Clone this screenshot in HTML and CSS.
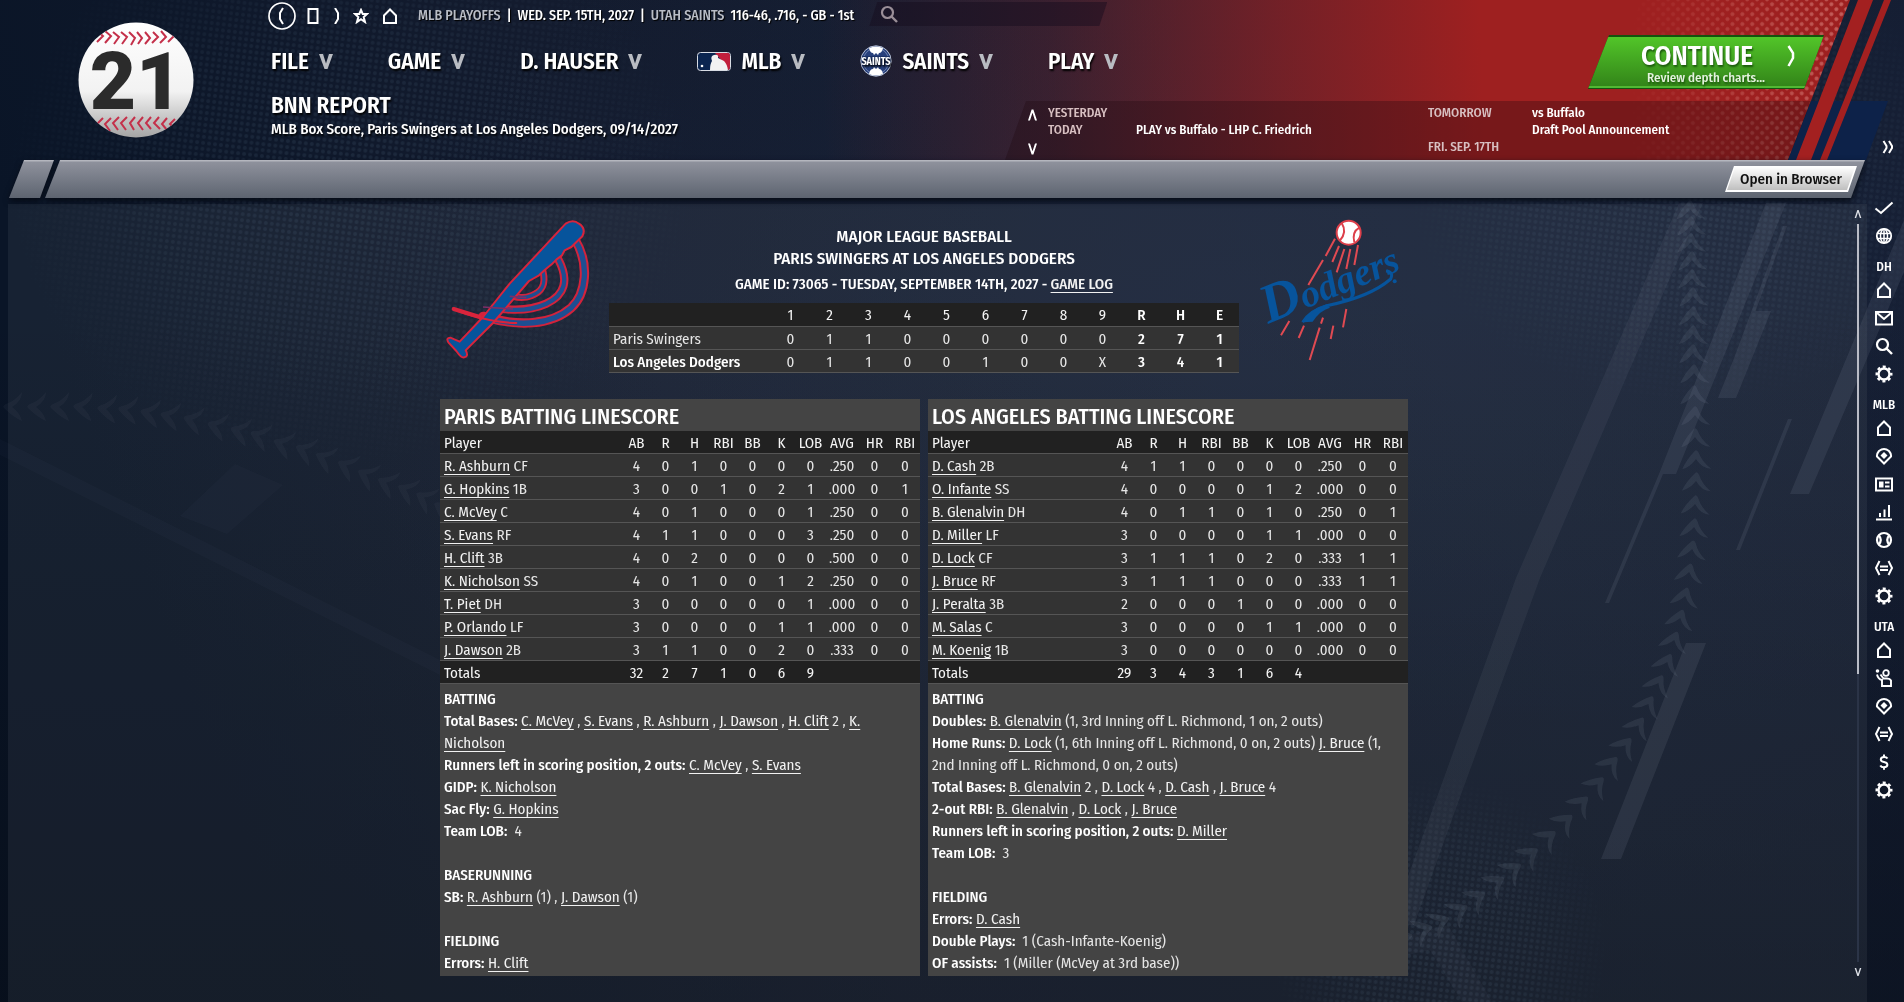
FILE: index.html
```html
<!DOCTYPE html>
<html lang="en">
<head>
<meta charset="utf-8">
<title>BNN Report - MLB Box Score</title>
<link rel="stylesheet" href="styles.css">
</head>
<body>
<svg class="backdrop" viewBox="0 0 1904 1002" preserveAspectRatio="xMaxYMin slice" aria-hidden="true">
  <defs>
    <linearGradient id="base" x1="0" y1="0.2" x2="1" y2="0"><stop offset="0" stop-color="#0a1527"/><stop offset=".3" stop-color="#131b2e"/><stop offset=".7" stop-color="#151f34"/><stop offset="1" stop-color="#151e33"/></linearGradient>
    <linearGradient id="fall" x1="0" y1="0" x2="0" y2="1"><stop offset=".3" stop-color="#050a12" stop-opacity="0"/><stop offset="1" stop-color="#050a12" stop-opacity=".5"/></linearGradient>
    <linearGradient id="red" gradientUnits="userSpaceOnUse" x1="820" y1="20" x2="1480" y2="0"><stop offset="0" stop-color="#9e2020" stop-opacity="0"/><stop offset=".35" stop-color="#9e2020" stop-opacity=".26"/><stop offset=".7" stop-color="#9e2020" stop-opacity=".68"/><stop offset="1" stop-color="#9e2020"/></linearGradient>
    <radialGradient id="spot"><stop offset="0" stop-color="#fff"/><stop offset=".55" stop-color="#fff" stop-opacity=".7"/><stop offset="1" stop-color="#fff" stop-opacity="0"/></radialGradient>
    <linearGradient id="edge"><stop offset="0" stop-color="#fff" stop-opacity="0"/><stop offset="1" stop-color="#fff"/></linearGradient>
    <pattern id="dots" width="6" height="6" patternUnits="userSpaceOnUse" patternTransform="rotate(7)"><circle cx="3" cy="3" r="2" fill="#5f7c93"/></pattern>
    <pattern id="pink" width="7" height="7" patternUnits="userSpaceOnUse" patternTransform="rotate(45)"><circle cx="3" cy="3" r="2" fill="#f3b0a8"/></pattern>
    <mask id="m1"><ellipse cx="350" cy="180" rx="350" ry="290" fill="url(#spot)"/><ellipse cx="1690" cy="180" rx="290" ry="230" fill="url(#spot)"/><ellipse cx="1440" cy="950" rx="170" ry="180" fill="url(#spot)"/></mask>
    <mask id="m2"><rect x="1630" width="220" height="160" fill="url(#edge)"/></mask>
    <marker id="stitch" viewBox="-20 -20 40 40" markerWidth="40" markerHeight="40" markerUnits="userSpaceOnUse" orient="auto"><path d="M-9-14Q0-10 9-1Q11 1 7 3Q-2 6-9 15Q-9 6 1 0Q-7-6-9-14Z" fill="#8f99ad"/></marker>
    <radialGradient id="glow"><stop offset="0" stop-color="#26324a" stop-opacity=".3"/><stop offset="1" stop-color="#26324a" stop-opacity="0"/></radialGradient>
  </defs>
  <rect width="1904" height="1002" fill="url(#base)"/>
  <ellipse cx="1250" cy="380" rx="900" ry="600" fill="url(#glow)"/>
  <rect width="1904" height="1002" fill="url(#fall)"/>
  <rect width="1904" height="1002" fill="url(#dots)" mask="url(#m1)" opacity=".17"/>
  <g fill="#b8c0d0" opacity=".1">
    <path d="M1679 203h24L1629 371 1540 578 1455 811 1414 925h-24L1432 811 1516 578 1606 371Z" opacity=".7"/>
    <path d="M1766 203h20L1676 474h-17Z"/>
    <path d="M1659 474h4L1609 603h-4ZM1783 226h4L1737 361h-4ZM1753 311h18L1736 398h-18ZM1788 419h4L1740 550h-4ZM1904 220v52L1809 494h-19ZM1686 643h20L1621 859h-20Z"/>
    <path d="M1408 935L1448 925 1492 1002H1462L1430 950 1408 955Z" opacity=".4"/>
    <path d="M235 464L283 485 227 534 180 516ZM0 439L440 660V675L0 455Z" opacity=".25"/>
  </g>
  <g fill="none" stroke="none" marker-mid="url(#stitch)">
    <polyline opacity=".13" points="1380 945 1403 938 1423 930 1440 922 1459 911 1477 898 1496 883 1513 870 1530 855 1548 838 1565 822 1581 804 1597 785 1611 765 1625 746 1638 726 1648 705 1658 684 1667 663 1674 641 1680 619 1685 597 1689 573 1692 550 1694 528 1695 505 1696 482 1696 460 1695 438 1695 416 1694 395 1694 374 1693 354 1693 335 1693 316 1693 297 1692 279 1692 261 1691 243 1691 226 1690 210 1690 195"/>
    <polyline opacity=".06" points="465 517 443 508 425 498 407 490 387 483 367 475 347 466 325 458 305 450 283 444 260 436 240 431 217 426 193 420 170 416 150 413 128 410 107 409 83 407 60 407 37 407 13 407 -10 407"/>
  </g>
  <path d="M660 0H1850L1788 160H620Z" fill="url(#red)"/>
  <path d="M1640 0H1850L1788 160H1600Z" fill="url(#pink)" mask="url(#m2)" opacity=".45"/>
  <path d="M1811 101H1888L1866 160H1788Z" fill="#0d2249"/>
  <path d="M1858 0H1873L1811 160H1796ZM1884 0H1891L1827 160H1820Z" fill="#a32020"/>
</svg>
<svg class="sprite" aria-hidden="true">
  <symbol id="i-home" viewBox="0 0 20 20"><path d="M4 9.500L10 3.500L16 9.500V17H4Z" fill="none" stroke="currentColor" stroke-width="2"/></symbol>
  <symbol id="i-gear" viewBox="0 0 20 20"><circle cx="10" cy="10" r="5.500" fill="none" stroke="currentColor" stroke-width="2.400"/><circle cx="10" cy="10" r="7.300" fill="none" stroke="currentColor" stroke-width="2.400" stroke-dasharray="3 2.733" stroke-dashoffset="1.500"/></symbol>
  <symbol id="i-search" viewBox="0 0 20 20"><circle cx="8.500" cy="8.500" r="5.500" fill="none" stroke="currentColor" stroke-width="2.200"/><path d="M12.500 12.500L18 18" stroke="currentColor" stroke-width="2.400"/></symbol>
  <symbol id="i-mail" viewBox="0 0 20 20"><path d="M2 4H18V16.500H2ZM2.500 4.500L10 11L17.500 4.500" fill="none" stroke="currentColor" stroke-width="2"/></symbol>
  <symbol id="i-field" viewBox="0 0 20 20"><path d="M10 17.500L3 10.500Q2.500 8 5 5Q10 1 15 5Q17.500 8 17 10.500Z" fill="none" stroke="currentColor" stroke-width="2"/><path d="M10 6L13.500 9.500L10 13L6.500 9.500Z" fill="currentColor"/></symbol>
  <symbol id="i-card" viewBox="0 0 20 20"><path d="M2 4.500H18V16.500H2Z" fill="none" stroke="currentColor" stroke-width="2"/><path d="M5 7.500H9.500V13.500H5ZM11 7.500H15.500V9.500H11ZM11 11.500H15.500V13.500H11Z" fill="currentColor"/></symbol>
  <symbol id="i-bars" viewBox="0 0 20 20"><path d="M2 17.500H18M6 15V11M10.500 15V7.500M15 15V3" fill="none" stroke="currentColor" stroke-width="2"/></symbol>
  <symbol id="i-ball" viewBox="0 0 20 20"><circle cx="10" cy="10" r="7" fill="none" stroke="currentColor" stroke-width="2.200"/><path d="M4.500 5Q9 10 4.500 15M15.500 5Q11 10 15.500 15" fill="none" stroke="currentColor" stroke-width="2.200"/></symbol>
  <symbol id="i-trade" viewBox="0 0 20 20"><path d="M5.500 3L2 10L5.500 17M14.500 3L18 10L14.500 17M6 8.500H14M6 12H14" fill="none" stroke="currentColor" stroke-width="2"/></symbol>
  <symbol id="i-globe" viewBox="0 0 20 20"><circle cx="10" cy="10" r="7.200" fill="none" stroke="currentColor" stroke-width="1.800"/><ellipse cx="10" cy="10" rx="3.500" ry="7" fill="none" stroke="currentColor" stroke-width="1.500"/><path d="M3 7.500H17M3 12.500H17M10 3V17" stroke="currentColor" stroke-width="1.500"/></symbol>
  <symbol id="i-check" viewBox="0 0 20 20"><path d="M1.500 10.500L7 15L18.500 4.500" fill="none" stroke="currentColor" stroke-width="2"/></symbol>
  <symbol id="i-staff" viewBox="0 0 20 20"><circle cx="3.500" cy="3" r="1.800" fill="currentColor"/><circle cx="12" cy="5" r="2.800" fill="none" stroke="currentColor" stroke-width="1.800"/><path d="M3 6.500Q4 11 8 12V18H17V12.500Q16 10.500 13 10.500H9.500L6.500 6.500" fill="none" stroke="currentColor" stroke-width="1.900"/></symbol>
  <symbol id="i-dollar" viewBox="0 0 20 20"><path d="M13.500 6.500Q12.500 5 10 5Q6.800 5 6.800 7.500Q6.800 9.500 10 10Q13.400 10.600 13.400 12.800Q13.400 15.200 10 15.200Q7.200 15.200 6.300 13.500M10 2.500V5M10 15V17.700" fill="none" stroke="currentColor" stroke-width="2"/></symbol>
  <symbol id="i-down" viewBox="0 0 14 16"><path d="M0 1H4L7 10.500L10 1H14L8.500 16H5.500Z" fill="currentColor"/></symbol>
  <symbol id="i-up" viewBox="0 0 10 12"><path d="M0 12L4 0H6L10 12H7.800L5 3.500L2.200 12Z" fill="currentColor"/></symbol>
  <symbol id="i-dn" viewBox="0 0 10 12"><path d="M0 0L4 12H6L10 0H7.800L5 8.500L2.200 0Z" fill="currentColor"/></symbol>
</svg>

<div class="app">
  <header class="header">
    <a class="brand" href="#" aria-label="Home">
      <svg width="116" height="116" viewBox="0 0 116 116">
        <defs><linearGradient id="bl" x1="0" y1="0" x2="0" y2="1"><stop offset="0" stop-color="#fff"/><stop offset=".6" stop-color="#f2f2f2"/><stop offset="1" stop-color="#a5a5a5"/></linearGradient>
        <clipPath id="bc"><circle cx="58" cy="58" r="57.500"/></clipPath></defs>
        <circle cx="58" cy="58" r="57.500" fill="url(#bl)"/>
        <g clip-path="url(#bc)" fill="none" stroke="#c4304a" stroke-width="2">
          <path d="M19 9l6 5-6 6M27 9l6 5-6 7M35 10l6 5-5 7M43 10l6 5-5 7M51 10l6 6-4 7M59 10l5 6-4 6M67 10l5 6-5 6M75 10l5 5-6 6M83 9l5 6-6 6M91 9l5 5-6 6"/>
          <path d="M25 96l-6 6 5 6M33 96l-6 6 5 7M41 95l-6 6 5 7M49 95l-6 6 5 7M57 95l-5 6 4 7M65 95l-5 6 5 7M73 95l-5 6 5 6M81 95l-5 6 6 6M89 96l-5 6 5 6M97 97l-5 5 5 5"/>
        </g>
        <text class="ball-num" x="58" y="87" text-anchor="middle">21</text>
      </svg>
    </a>
    <div class="topbar">
      <nav class="quick" aria-label="Quick navigation">
        <button class="ibtn" aria-label="Back"><svg width="28" height="28" viewBox="0 0 28 28" fill="none" stroke="#fff" stroke-width="2"><circle cx="14" cy="14" r="13" stroke-width="1.700"/><path d="M15 6L12 11V17L15 22"/></svg></button>
        <button class="ibtn" aria-label="Stop"><svg width="12" height="16" viewBox="0 0 12 16" fill="none" stroke="#fff" stroke-width="2"><path d="M1.500 1H10.500V15H1.500Z"/></svg></button>
        <button class="ibtn" aria-label="Forward"><svg width="12" height="16" viewBox="0 0 12 16" fill="none" stroke="#fff" stroke-width="2"><path d="M5 0L8 5V11L5 16"/></svg></button>
        <button class="ibtn" aria-label="Favorites"><svg width="16" height="16" viewBox="0 0 16 16" fill="none" stroke="#fff" stroke-width="2"><path d="M8 2L9.700 6H14L10.700 9L12 14L8 11.200L4 14L5.300 9L2 6H6.300Z"/></svg></button>
        <button class="ibtn" aria-label="Home"><svg width="20" height="20"><use href="#i-home"/></svg></button>
      </nav>
      <span class="dim">MLB PLAYOFFS</span><span>|</span><span>WED. SEP. 15TH, 2027</span><span>|</span><span class="dim">UTAH SAINTS</span><span>116-46, .716, - GB - 1st</span>
      <label class="search"><svg width="20" height="20"><use href="#i-search"/></svg><input type="text" aria-label="Search"></label>
    </div>
    <div class="menurow">
      <nav class="menu" aria-label="Main">
        <button>FILE <svg width="14" height="16"><use href="#i-down"/></svg></button>
        <button>GAME <svg width="14" height="16"><use href="#i-down"/></svg></button>
        <button>D. HAUSER <svg width="14" height="16"><use href="#i-down"/></svg></button>
        <button><svg width="34" height="19" viewBox="0 0 34 19"><rect x=".5" y=".5" width="33" height="18" rx="3" fill="#0b2550" stroke="#d8dce4"/><path d="M18 1H31Q33 1 33 4V15Q33 18 31 18L25 9Z" fill="#c21f3c"/><path d="M13 18Q13 12 15 9Q13 4 17 3Q22 2 21 6L27 9Q30 12 31 18Z" fill="#f2f2f2"/><circle cx="5" cy="14" r="1.300" fill="#fff"/></svg>MLB <svg width="14" height="16"><use href="#i-down"/></svg></button>
        <button><svg width="32" height="32" viewBox="0 0 32 32"><circle cx="16" cy="16" r="15.200" fill="#27407c" stroke="#b9c2d6"/><circle cx="16" cy="16" r="13" fill="none" stroke="#7f92bd" stroke-width=".8"/><path d="M9 3Q16 0 23 3Q22 8 19 8L18 10L16 8L14 10L13 8Q10 8 9 3ZM9 29Q16 32 23 29Q22 24 19 24L18 22L16 24L14 22L13 24Q10 24 9 29Z" fill="#fff"/><rect x="2" y="11" width="28" height="10" fill="#1c3266"/><text class="saints-txt" x="16" y="20" text-anchor="middle">SAINTS</text></svg>SAINTS <svg width="14" height="16"><use href="#i-down"/></svg></button>
        <button>PLAY <svg width="14" height="16"><use href="#i-down"/></svg></button>
      </nav>
      <button class="continue"><span class="continue-face"><b>CONTINUE</b><small>Review depth charts...</small><svg width="8" height="22" viewBox="0 0 8 22" fill="none" stroke="#fff" stroke-width="2.500"><path d="M1.500 1L6 8V13L1.500 21"/></svg></span></button>
    </div>
    <div class="titles">
      <h1>BNN REPORT</h1>
      <p>MLB Box Score, Paris Swingers at Los Angeles Dodgers, 09/14/2027</p>
    </div>
    <section class="sched" aria-label="Schedule">
      <div class="sched-nav">
        <button class="ibtn" aria-label="Earlier"><svg width="9" height="12"><use href="#i-up"/></svg></button>
        <button class="ibtn" aria-label="Later"><svg width="9" height="12"><use href="#i-dn"/></svg></button>
      </div>
      <dl class="sched-list">
        <dt>YESTERDAY</dt><dd></dd>
        <dt>TODAY</dt><dd>PLAY vs Buffalo - LHP C. Friedrich</dd>
      </dl>
      <dl class="sched-list late">
        <dt>TOMORROW</dt><dd>vs Buffalo</dd>
        <dt></dt><dd>Draft Pool Announcement</dd>
        <dt>FRI. SEP. 17TH</dt><dd></dd>
      </dl>
    </section>
  </header>

  <div class="toolbar">
    <span class="tab-stub"></span>
    <div class="tab-main"><button class="open"><span>Open in Browser</span></button></div>
  </div>

  <div class="content">
    <main class="page">
      <section class="head">
        <svg class="logo-l" width="150" height="144" viewBox="40 50 450 432" role="img" aria-label="Paris Swingers">
          <g fill="none" stroke-linecap="round">
            <path stroke="#d2233c" stroke-width="28" d="M436 118C480 190 470 280 425 322C365 375 265 380 160 348"/>
            <path stroke="#d2233c" stroke-width="25" d="M385 175C420 240 405 285 350 310C305 330 250 332 195 322"/>
            <path stroke="#d2233c" stroke-width="21" d="M340 213C350 255 335 275 305 286C285 294 265 292 250 288"/>
            <path stroke="#1d4f92" stroke-width="16" d="M436 118C480 190 470 280 425 322C365 375 265 380 170 351"/>
            <path stroke="#1d4f92" stroke-width="13" d="M385 175C420 240 405 285 350 310C305 330 250 332 205 324"/>
            <path stroke="#1d4f92" stroke-width="10" d="M340 213C350 255 335 275 305 286C285 294 270 292 255 288"/>
          </g>
          <path d="M408 70Q430 55 448 70Q470 85 458 108L425 140L405 150L397 165L380 178L366 192L346 208L328 225L298 242L190 368L108 450Q118 468 104 471Q95 474 80 452L56 426Q48 412 62 412L90 424L160 350L240 250Z" fill="#07549c" stroke="#d9243c" stroke-width="6" stroke-linejoin="round"/>
          <path d="M70 325C110 345 200 368 260 368" fill="none" stroke="#d9243c" stroke-width="6" stroke-linecap="round"/>
          <path d="M72 326L150 350" stroke="#d9243c" stroke-width="12" stroke-linecap="round"/>
          <path d="M160 320L250 326M240 288L290 292" stroke="#7c2f68" stroke-width="5"/>
        </svg>
        <div class="head-mid">
          <h2>MAJOR LEAGUE BASEBALL</h2>
          <h2>PARIS SWINGERS AT LOS ANGELES DODGERS</h2>
          <p class="game-id">GAME ID: 73065 - TUESDAY, SEPTEMBER 14TH, 2027 - <a href="#">GAME LOG</a></p>
          <table class="grid innings">
            <thead><tr><th></th><td>1</td><td>2</td><td>3</td><td>4</td><td>5</td><td>6</td><td>7</td><td>8</td><td>9</td><th>R</th><th>H</th><th>E</th></tr></thead>
            <tbody>
              <tr><td>Paris Swingers</td><td>0</td><td>1</td><td>1</td><td>0</td><td>0</td><td>0</td><td>0</td><td>0</td><td>0</td><th>2</th><th>7</th><th>1</th></tr>
              <tr><th>Los Angeles Dodgers</th><td>0</td><td>1</td><td>1</td><td>0</td><td>0</td><td>1</td><td>0</td><td>0</td><td>X</td><th>3</th><th>4</th><th>1</th></tr>
            </tbody>
          </table>
        </div>
        <svg class="logo-r" width="140" height="144" viewBox="960 50 420 432" role="img" aria-label="Los Angeles Dodgers">
          <g fill="none" stroke="#e04a52" stroke-width="6"><path d="M1185 115L1157 167M1149 179L1105 254M1197 137L1177 185M1213 146L1190 216M1231 146L1219 206M1254 134L1243 194M1048 362L1023 405M1092 376L1076 413M1149 352L1143 370M1139 382L1109 479M1180 376L1172 416M1219 326L1209 381"/></g>
          <circle cx="1226" cy="97" r="36" fill="#fff" stroke="#dd3f4a" stroke-width="6"/>
          <path d="M1205 68Q1222 95 1200 120M1258 82Q1235 95 1243 126" fill="none" stroke="#dd3f4a" stroke-width="6"/>
          <text class="dodgers" x="985" y="370" transform="rotate(-22 985 370)"><tspan class="cap">D</tspan>odgers</text>
          <path d="M1088 366Q1110 330 1160 316Q1290 290 1352 236Q1362 214 1338 212" fill="none" stroke="#07549c" stroke-width="9"/>
          <path d="M1088 366Q1105 330 1160 312L1170 322Q1140 330 1118 364Z" fill="#07549c"/>
          <circle cx="1364" cy="243" r="6" fill="#07549c"/>
        </svg>
      </section>

      <div class="boxes">
        <section class="box">
          <h3>PARIS BATTING LINESCORE</h3>
          <table class="grid batting">
            <thead><tr><td>Player</td><td>AB</td><td>R</td><td>H</td><td>RBI</td><td>BB</td><td>K</td><td>LOB</td><td>AVG</td><td>HR</td><td>RBI</td></tr></thead>
            <tbody>
              <tr><td><a href="#">R. Ashburn</a> CF</td><td>4</td><td>0</td><td>1</td><td>0</td><td>0</td><td>0</td><td>0</td><td>.250</td><td>0</td><td>0</td></tr>
              <tr><td><a href="#">G. Hopkins</a> 1B</td><td>3</td><td>0</td><td>0</td><td>1</td><td>0</td><td>2</td><td>1</td><td>.000</td><td>0</td><td>1</td></tr>
              <tr><td><a href="#">C. McVey</a> C</td><td>4</td><td>0</td><td>1</td><td>0</td><td>0</td><td>0</td><td>1</td><td>.250</td><td>0</td><td>0</td></tr>
              <tr><td><a href="#">S. Evans</a> RF</td><td>4</td><td>1</td><td>1</td><td>0</td><td>0</td><td>0</td><td>3</td><td>.250</td><td>0</td><td>0</td></tr>
              <tr><td><a href="#">H. Clift</a> 3B</td><td>4</td><td>0</td><td>2</td><td>0</td><td>0</td><td>0</td><td>0</td><td>.500</td><td>0</td><td>0</td></tr>
              <tr><td><a href="#">K. Nicholson</a> SS</td><td>4</td><td>0</td><td>1</td><td>0</td><td>0</td><td>1</td><td>2</td><td>.250</td><td>0</td><td>0</td></tr>
              <tr><td><a href="#">T. Piet</a> DH</td><td>3</td><td>0</td><td>0</td><td>0</td><td>0</td><td>0</td><td>1</td><td>.000</td><td>0</td><td>0</td></tr>
              <tr><td><a href="#">P. Orlando</a> LF</td><td>3</td><td>0</td><td>0</td><td>0</td><td>0</td><td>1</td><td>1</td><td>.000</td><td>0</td><td>0</td></tr>
              <tr><td><a href="#">J. Dawson</a> 2B</td><td>3</td><td>1</td><td>1</td><td>0</td><td>0</td><td>2</td><td>0</td><td>.333</td><td>0</td><td>0</td></tr>
            </tbody>
            <tfoot><tr><td>Totals</td><td>32</td><td>2</td><td>7</td><td>1</td><td>0</td><td>6</td><td>9</td><td></td><td></td><td></td></tr></tfoot>
          </table>
          <div class="notes">
            <p><b>BATTING</b></p>
            <p><b>Total Bases:</b> <a href="#">C. McVey</a> , <a href="#">S. Evans</a> , <a href="#">R. Ashburn</a> , <a href="#">J. Dawson</a> , <a href="#">H. Clift</a> 2 , <a href="#">K. Nicholson</a></p>
            <p><b>Runners left in scoring position, 2 outs:</b> <a href="#">C. McVey</a> , <a href="#">S. Evans</a></p>
            <p><b>GIDP:</b> <a href="#">K. Nicholson</a></p>
            <p><b>Sac Fly:</b> <a href="#">G. Hopkins</a></p>
            <p><b>Team LOB:</b> &nbsp;4</p>
            <p class="part"><b>BASERUNNING</b></p>
            <p><b>SB:</b> <a href="#">R. Ashburn</a> (1) , <a href="#">J. Dawson</a> (1)</p>
            <p class="part"><b>FIELDING</b></p>
            <p><b>Errors:</b> <a href="#">H. Clift</a></p>
          </div>
        </section>
        <section class="box">
          <h3>LOS ANGELES BATTING LINESCORE</h3>
          <table class="grid batting">
            <thead><tr><td>Player</td><td>AB</td><td>R</td><td>H</td><td>RBI</td><td>BB</td><td>K</td><td>LOB</td><td>AVG</td><td>HR</td><td>RBI</td></tr></thead>
            <tbody>
              <tr><td><a href="#">D. Cash</a> 2B</td><td>4</td><td>1</td><td>1</td><td>0</td><td>0</td><td>0</td><td>0</td><td>.250</td><td>0</td><td>0</td></tr>
              <tr><td><a href="#">O. Infante</a> SS</td><td>4</td><td>0</td><td>0</td><td>0</td><td>0</td><td>1</td><td>2</td><td>.000</td><td>0</td><td>0</td></tr>
              <tr><td><a href="#">B. Glenalvin</a> DH</td><td>4</td><td>0</td><td>1</td><td>1</td><td>0</td><td>1</td><td>0</td><td>.250</td><td>0</td><td>1</td></tr>
              <tr><td><a href="#">D. Miller</a> LF</td><td>3</td><td>0</td><td>0</td><td>0</td><td>0</td><td>1</td><td>1</td><td>.000</td><td>0</td><td>0</td></tr>
              <tr><td><a href="#">D. Lock</a> CF</td><td>3</td><td>1</td><td>1</td><td>1</td><td>0</td><td>2</td><td>0</td><td>.333</td><td>1</td><td>1</td></tr>
              <tr><td><a href="#">J. Bruce</a> RF</td><td>3</td><td>1</td><td>1</td><td>1</td><td>0</td><td>0</td><td>0</td><td>.333</td><td>1</td><td>1</td></tr>
              <tr><td><a href="#">J. Peralta</a> 3B</td><td>2</td><td>0</td><td>0</td><td>0</td><td>1</td><td>0</td><td>0</td><td>.000</td><td>0</td><td>0</td></tr>
              <tr><td><a href="#">M. Salas</a> C</td><td>3</td><td>0</td><td>0</td><td>0</td><td>0</td><td>1</td><td>1</td><td>.000</td><td>0</td><td>0</td></tr>
              <tr><td><a href="#">M. Koenig</a> 1B</td><td>3</td><td>0</td><td>0</td><td>0</td><td>0</td><td>0</td><td>0</td><td>.000</td><td>0</td><td>0</td></tr>
            </tbody>
            <tfoot><tr><td>Totals</td><td>29</td><td>3</td><td>4</td><td>3</td><td>1</td><td>6</td><td>4</td><td></td><td></td><td></td></tr></tfoot>
          </table>
          <div class="notes">
            <p><b>BATTING</b></p>
            <p><b>Doubles:</b> <a href="#">B. Glenalvin</a> (1, 3rd Inning off L. Richmond, 1 on, 2 outs)</p>
            <p><b>Home Runs:</b> <a href="#">D. Lock</a> (1, 6th Inning off L. Richmond, 0 on, 2 outs) <a href="#">J. Bruce</a> (1, 2nd Inning off L. Richmond, 0 on, 2 outs)</p>
            <p><b>Total Bases:</b> <a href="#">B. Glenalvin</a> 2 , <a href="#">D. Lock</a> 4 , <a href="#">D. Cash</a> , <a href="#">J. Bruce</a> 4</p>
            <p><b>2-out RBI:</b> <a href="#">B. Glenalvin</a> , <a href="#">D. Lock</a> , <a href="#">J. Bruce</a></p>
            <p><b>Runners left in scoring position, 2 outs:</b> <a href="#">D. Miller</a></p>
            <p><b>Team LOB:</b> &nbsp;3</p>
            <p class="part"><b>FIELDING</b></p>
            <p><b>Errors:</b> <a href="#">D. Cash</a></p>
            <p><b>Double Plays:</b> &nbsp;1 (Cash-Infante-Koenig)</p>
            <p><b>OF assists:</b> &nbsp;1 (Miller (McVey at 3rd base))</p>
          </div>
        </section>
      </div>
    </main>
    <div class="scroll" aria-hidden="true">
      <svg width="8" height="8"><use href="#i-up"/></svg>
      <span class="track"><span class="thumb"></span></span>
      <svg width="8" height="8"><use href="#i-dn"/></svg>
    </div>
  </div>

  <aside class="rail">
    <button class="ibtn expand" aria-label="Expand"><svg width="12" height="14" viewBox="0 0 12 14" fill="none" stroke="#fff" stroke-width="2"><path d="M1.500 1L4.500 6V8L1.500 13M7 1L10 6V8L7 13"/></svg></button>
    <nav class="rail-list" aria-label="Shortcuts">
      <a href="#" aria-label="Tasks"><svg><use href="#i-check"/></svg></a>
      <a href="#" aria-label="World"><svg><use href="#i-globe"/></svg></a>
      <span>DH</span>
      <a href="#" aria-label="Manager home"><svg><use href="#i-home"/></svg></a>
      <a href="#" aria-label="Mail"><svg><use href="#i-mail"/></svg></a>
      <a href="#" aria-label="Search"><svg><use href="#i-search"/></svg></a>
      <a href="#" aria-label="Manager settings"><svg><use href="#i-gear"/></svg></a>
      <span>MLB</span>
      <a href="#" aria-label="League home"><svg><use href="#i-home"/></svg></a>
      <a href="#" aria-label="Scores"><svg><use href="#i-field"/></svg></a>
      <a href="#" aria-label="News"><svg><use href="#i-card"/></svg></a>
      <a href="#" aria-label="Stats"><svg><use href="#i-bars"/></svg></a>
      <a href="#" aria-label="Players"><svg><use href="#i-ball"/></svg></a>
      <a href="#" aria-label="Transactions"><svg><use href="#i-trade"/></svg></a>
      <a href="#" aria-label="League settings"><svg><use href="#i-gear"/></svg></a>
      <span>UTA</span>
      <a href="#" aria-label="Team home"><svg><use href="#i-home"/></svg></a>
      <a href="#" aria-label="Roster"><svg><use href="#i-staff"/></svg></a>
      <a href="#" aria-label="Depth"><svg><use href="#i-field"/></svg></a>
      <a href="#" aria-label="Trades"><svg><use href="#i-trade"/></svg></a>
      <a href="#" aria-label="Finances"><svg><use href="#i-dollar"/></svg></a>
      <a href="#" aria-label="Team settings"><svg><use href="#i-gear"/></svg></a>
    </nav>
  </aside>
</div>
</body>
</html>
```
FILE: styles.css
```css
* { box-sizing: border-box; margin: 0; padding: 0; }
body { background: #131b2e; color: #fff; font: 400 15px/22px "Fira Sans Condensed", "Roboto Condensed", sans-serif; }
button { font: inherit; color: inherit; background: none; border: 0; cursor: pointer; }
a { color: inherit; }
svg { display: block; flex: none; }

.backdrop { position: absolute; inset: 0; width: 100%; height: 100%; z-index: -1; }
.sprite { position: absolute; width: 0; height: 0; }

.app { display: grid; grid-template-columns: minmax(0, 1fr) 37px; grid-template-rows: 160px 44px 1fr; min-height: 100vh; position: relative; }

/* header */
.header { display: grid; grid-template-columns: 271px minmax(0, 734fr) minmax(0, 862fr); grid-template-rows: 32px 60px 68px; }
.brand { grid-row: 1 / 4; padding: 22px 0 0 78px; }
.ball-num { font: 900 80px Roboto, sans-serif; fill: #2b2b2b; }
.saints-txt { font: 700 10px "Fira Sans Condensed", sans-serif; fill: #fff; }
.dodgers { font: italic 700 115px "Liberation Serif", serif; fill: #07549c; }
.dodgers .cap { font-size: 165px; }
.topbar { grid-column: 2 / 4; display: flex; align-items: center; gap: 6px; font-size: 14px; font-weight: 500; line-height: 16px; white-space: nowrap; text-shadow: 1px 1px 1px #000; }
.dim { color: #b9bdc6; }
.ibtn { display: flex; align-items: center; justify-content: center; }
.quick { display: flex; align-items: center; gap: 11px; margin: 0 12px 0 -3px; }
.search { display: flex; align-items: center; align-self: flex-start; width: 238px; height: 24px; margin: 2px 0 0 9px; padding-left: 10px; background: rgba(20, 12, 28, .45); color: #9a8f98; clip-path: polygon(8px 0, 100% 0, calc(100% - 8px) 100%, 0 100%); }
.search input { flex: 1; min-width: 0; margin: 0 12px 0 6px; background: none; border: 0; outline: 0; color: #fff; font: inherit; }
.menurow { grid-column: 2 / 4; display: flex; align-items: center; justify-content: space-between; }
.menu { display: flex; gap: 55px; padding-bottom: 2px; }
.menu button { display: flex; align-items: center; gap: 10px; font-size: 23px; font-weight: 600; line-height: 32px; text-shadow: 1px 2px 2px #000; white-space: nowrap; }
.menu button svg:last-child { color: #b9bcc2; }
.continue { width: 236px; height: 54px; margin-right: 43px; background: #14520e; clip-path: polygon(21px 0, 100% 0, calc(100% - 20px) 100%, 0 100%); }
.continue-face { display: grid; grid-template-rows: 32px 15px; align-content: end; justify-items: center; position: relative; height: 51px; background: linear-gradient(#52c529, #338519); border-bottom: 2px solid #51b833; text-shadow: 1px 2px 2px #1c5a0c; }
.continue b { font-size: 27px; font-weight: 600; line-height: 34px; margin-right: 18px; }
.continue small { font-size: 13px; font-weight: 500; line-height: 13px; color: #e4f2de; }
.continue svg { position: absolute; right: 29px; top: 8px; }
.titles { text-shadow: 1px 2px 2px #000; }
.titles h1 { font-size: 23px; font-weight: 600; line-height: 27px; }
.titles p { font-size: 15px; font-weight: 500; line-height: 20px; white-space: nowrap; }
.sched { align-self: end; display: flex; height: 59px; margin-right: 56px; background: rgba(30, 8, 14, .3); clip-path: polygon(21px 0, 100% 0, calc(100% - 23px) 100%, 0 100%); font-size: 13px; font-weight: 500; line-height: 17px; white-space: nowrap; }
.sched-nav { display: flex; flex-direction: column; justify-content: space-between; padding: 8px 11px 5px 23px; }
.sched-list { display: grid; grid-template-columns: 88px 1fr; grid-auto-rows: 17px; align-content: start; width: 380px; padding-top: 3px; }
.sched-list.late { grid-template-columns: 104px 1fr; width: auto; }
.sched dt { color: #d8c0c2; }

/* toolbar strip */
.toolbar { display: flex; height: 38px; margin: 0 2px 0 9px; filter: drop-shadow(0 3px 3px #050a14); }
.tab-stub, .tab-main { background: linear-gradient(#b4b6be 0 1px, #8e919c 2px, #5d6470); }
.tab-stub { width: 45px; clip-path: polygon(15px 0, 100% 0, calc(100% - 14px) 100%, 0 100%); }
.tab-main { flex: 1; display: flex; justify-content: flex-end; align-items: flex-start; margin-left: -9px; padding: 6px 8px 0 0; clip-path: polygon(15px 0, 100% 0, calc(100% - 14px) 100%, 0 100%); }
.open { height: 26px; padding: 1px 2px 2px; background: #fff; clip-path: polygon(9px 0, 100% 0, calc(100% - 9px) 100%, 0 100%); }
.open span { display: block; width: 128px; height: 23px; background: linear-gradient(#fff, #bfbfbf); clip-path: polygon(8px 0, 100% 0, calc(100% - 8px) 100%, 0 100%); color: #111; font-size: 15px; font-weight: 500; line-height: 25px; text-align: center; }

/* report */
.content { display: flex; grid-column: 1; margin-left: 8px; background: rgba(125, 130, 140, .12); }
.page { flex: 1; display: flex; flex-direction: column; align-items: center; padding: 13px 0 26px; }
.head { display: grid; grid-template-columns: 169px 630px 169px; }
.logo-l { margin-left: 3px; }
.logo-r { margin-left: 21px; }
.head-mid { padding-top: 9px; text-align: center; }
.head h2 { font-size: 17px; font-weight: 500; line-height: 22px; }
.game-id { padding: 3px 0 8px; font-weight: 500; }
.grid { width: 100%; table-layout: fixed; border-collapse: collapse; color: #e6e6e6; line-height: 20px; }
.grid tr { height: 23px; background: #333; border-bottom: 1px solid #555; }
.grid thead tr, .grid tfoot tr { background: #212121; color: #f4f4f4; }
.grid td, .grid th { padding-top: 2px; text-align: center; white-space: nowrap; }
.grid th { font-weight: 500; color: #fff; }
.grid td:first-child, .grid th:first-child { text-align: left; padding-left: 4px; }
.innings th, .innings td { width: 39px; }
.innings th:first-child, .innings td:first-child { width: 162px; }
.batting td { width: 29px; }
.batting td:first-child { width: 182px; }
.batting td:nth-child(9) { width: 34px; }
.batting td:nth-child(10) { width: 31px; }
.batting td:nth-child(11) { width: 30px; }
.page a { text-decoration: underline; text-decoration-thickness: 1px; text-underline-offset: 3px; text-decoration-skip-ink: none; color: #f2f2f2; }
.boxes { display: grid; grid-template-columns: 480px 480px; gap: 8px; margin-top: 26px; }
.box { background: #444; }
.box h3 { padding: 4px 4px 0; font-size: 22px; font-weight: 500; line-height: 28px; }
.notes { padding: 4px 4px 2px; color: #e6e6e6; }
.notes b { font-weight: 500; color: #fff; }
.part { padding-top: 22px; }
.scroll { width: 27px; display: flex; flex-direction: column; align-items: center; gap: 6px; padding: 6px 0 26px 9px; color: #dfe2e8; }
.track { flex: 1; width: 2px; background: #2b3447; }
.thumb { display: block; height: 61%; background: #b9bcc6; }

/* shortcut rail */
.rail { grid-column: 2; grid-row: 1 / 4; }
.expand { width: 37px; height: 14px; margin: 140px 0 40px; padding-left: 4px; }
.rail-list { display: flex; flex-direction: column; align-items: center; padding-right: 3px; }
.rail-list a { display: flex; align-items: center; height: 28px; }
.rail-list svg { width: 20px; height: 20px; }
.rail-list span { height: 26px; padding-top: 8px; font-size: 13px; font-weight: 500; line-height: 18px; }
```
